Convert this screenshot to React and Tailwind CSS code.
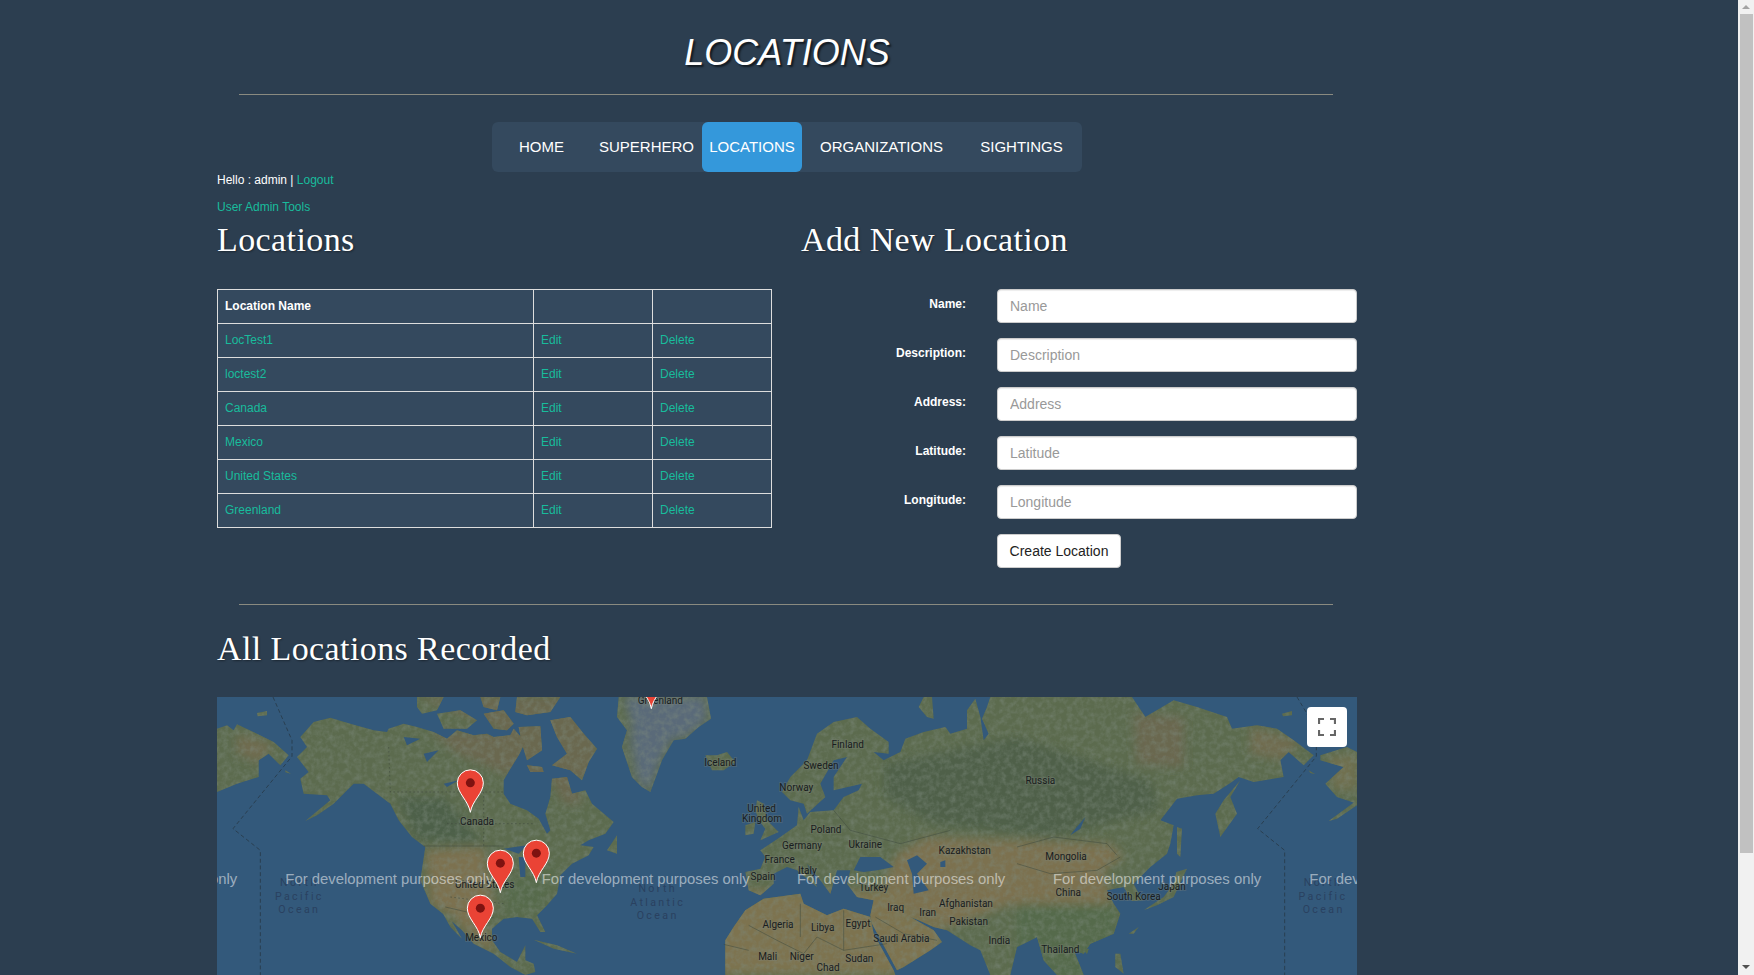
const NAV = [
  { label: "HOME", w: "w-[99px]" },
  { label: "SUPERHERO", w: "w-[111px]" },
  { label: "LOCATIONS", w: "w-[100px]", active: true },
  { label: "ORGANIZATIONS", w: "w-[159px]" },
  { label: "SIGHTINGS", w: "w-[121px]" },
];
const ROWS = ["LocTest1", "loctest2", "Canada", "Mexico", "United States", "Greenland"];
const FIELDS = ["Name", "Description", "Address", "Latitude", "Longitude"];

// the map is traced in three 400px panels at 3x, so panel b starts at 1200 and c at 2400
const B = 1200;
const C = 2400;
const pts = (s, dx = 0) => {
  const n = s.trim().split(/\s+/).map(Number);
  const out = [];
  for (let i = 0; i < n.length; i += 2) out.push(`${n[i] + dx} ${n[i + 1]}`);
  return out;
};
const shape = (s, dx = 0) => `M${pts(s, dx).join("L")}Z`;

const EURASIA = `M${[
  ...pts("520 310 495 285 520 240 570 190 600 110 650 75 720 60 760 95 815 135 815 170 770 165 800 190 850 165 865 125 920 105 985 90 1000 110 1050 95 1050 40 1075 5 1090 60 1100 130 1115 110 1095 65 1110 30 1120 0", B),
  ...pts("0 0 345 0 385 60 470 10 540 30 630 60 645 95 720 85 780 95 830 130 890 175 860 205 815 165 790 190 800 240 710 255 665 240 640 258 590 290 540 295 480 305 430 370 470 385 460 440 450 470 400 510 350 560 375 610 345 612 320 570 270 580 290 620 310 650 290 710 220 740 200 770 170 760 200 834 120 834 80 790 60 720 0 750", C),
  ...pts("1180 834 1120 834 1090 760 1060 745 990 700 950 690 905 670 880 660 950 700 975 735 940 760 860 810 840 820 765 680 760 655 770 610 720 600 690 560 700 520 660 520 640 590 610 550 570 500 600 570 540 520 510 510 470 530 470 560 430 595 395 580 385 525 430 515 445 480 430 460 490 420 540 385 545 330 560 370 580 345 650 340 680 300 725 280 735 260 650 280 650 240 690 180 650 190 610 260 625 300 570 350 560 320", B),
].join("L")}Z`;

const LAND = [
  shape("0 95 30 85 50 100 60 82 120 110 170 135 215 175 190 205 155 170 125 190 125 240 60 260 0 285"),
  shape("120 48 150 42 150 55 122 58"),
  shape("205 220 222 230 205 226"),
  // north america
  shape("240 180 270 150 250 120 290 75 340 62 400 80 470 100 510 105 515 95 560 80 600 90 650 105 690 125 720 100 770 115 810 110 830 120 880 115 890 95 925 135 905 175 880 215 860 250 860 290 880 320 930 340 965 365 990 410 1000 400 985 350 1000 300 1005 245 1050 240 1065 290 1105 280 1125 320 1190 375 1165 410 1115 430 1090 445 1130 450 1115 475 1065 500 1030 535 1020 590 990 625 960 655 985 705 970 705 945 665 900 660 860 665 825 695 825 730 850 765 900 795 925 745 925 790 950 800 955 825 925 834 880 810 830 770 770 740 735 700 690 660 640 620 610 550 625 450 585 420 545 370 520 320 480 290 440 260 410 260 385 285 350 320 300 355 265 372 340 310 330 295 260 290 250 245 275 225"),
  shape("670 635 700 665 735 725 700 690"),
  shape("950 728 1020 745 1080 770 1010 755"),
  shape("1170 460 1200 415 1200 470"),
  // arctic islands
  shape("600 0 680 0 660 40 615 50 600 30"),
  shape("660 50 730 40 780 70 750 95 680 95"),
  shape("790 0 850 0 840 40 800 30"),
  shape("800 50 860 40 890 80 870 100 830 95"),
  shape("900 0 1030 0 1000 45 930 55 895 45"),
  shape("905 90 970 88 975 160 930 190 915 140"),
  shape("1000 70 1060 60 1100 110 1140 155 1115 195 1095 250 1060 220 1005 205 1050 170 1020 120"),
  shape("930 205 975 210 980 225 940 225"),
  // greenland, iceland, britain
  shape("5 0 270 0 282 65 245 90 205 125 170 130 135 190 100 285 75 270 45 240 15 150 30 100 0 60", B),
  shape("265 175 300 175 330 165 355 195 320 220 285 220", B),
  shape("420 310 440 320 450 370 485 405 430 430 445 395 425 370 415 340", B),
  shape("385 385 415 375 410 410 385 415", B),
  shape("905 30 920 0 945 0 950 65 930 60", B),
  // africa
  shape("325 730 350 690 385 640 440 605 550 590 560 620 630 655 680 635 760 660 770 710 830 820 835 834 325 834", B),
  EURASIA,
  shape("670 250 640 300 660 350 610 420 595 350 620 310", C),
  shape("480 390 495 395 490 480 480 470", C),
  shape("380 640 440 600 470 560 478 525 510 515 470 600 420 625", C),
  shape("335 710 365 690 350 710", C),
  shape("295 770 310 770 320 830 295 810", C),
  shape("200 760 215 755 210 770", C),
  shape("910 175 990 150 1020 165 1020 320 960 300 925 260 980 210 910 190", C),
  shape("935 372 1020 310 1020 325 960 365", C),
  shape("795 50 825 42 825 55 798 58", C),
  shape("875 220 895 232 880 228", C),
].join("");

const TINTS = [
  ["#6b674f", shape("640 100 950 110 950 220 860 230 720 170")],
  ["#6b674f", shape("600 0 1140 0 1140 250 900 250 880 110")],
  ["#6b674f", shape("1000 240 1060 240 1100 320 1040 320")],
  ["#7b7150", shape("625 460 800 450 830 620 760 680 640 620")],
  ["#7b7150", shape("700 650 820 700 830 770 770 730")],
  ["#4e6049", shape("540 300 680 300 800 440 600 430")],
  ["#566a4c", shape("860 560 1020 500 980 650 870 660")],
  ["#6f6c4f", shape("60 110 170 140 130 200 60 170")],
  ["#5b6a54", shape("0 60 40 100 30 200 60 260 120 300 0 300", B)],
  ["#5a6b79", shape("20 0 265 0 270 70 205 120 165 125 130 190 95 285 60 240 45 150 45 80", B)],
  ["#4f6048", shape("800 200 1200 120 1600 250 1630 340 1300 420 950 380 800 300", B)],
  ["#7b7150", shape("840 470 930 420 1200 430 1480 440 1520 480 1460 520 1500 680 1280 680 1180 620 1000 690 790 620 800 560", B)],
  ["#7d7350", shape("760 610 980 690 970 780 840 830", B)],
  ["#7d7350", shape("300 580 860 580 860 834 300 834", B)],
  ["#6f6c4f", shape("700 90 850 130 800 190 700 170", C)],
  ["#6a684f", shape("350 50 500 60 500 210 360 200", C)],
  ["#556a4c", shape("0 620 300 620 290 834 0 834", C)],
  ["#70704f", shape("930 180 1020 170 1020 280 950 280", C)],
];

const WATER = [
  shape("620 170 665 160 630 195"),
  shape("560 120 610 125 570 145"),
  shape("680 260 725 250 690 270"),
  shape("860 455 930 445 905 470"),
  shape("905 480 925 480 925 540 910 540"),
  shape("950 460 985 500 950 505"),
  shape("710 520 730 480 790 480 830 510 780 520 740 525", B),
  shape("870 490 900 475 930 500 900 530 935 580 890 590 885 530", B),
  shape("970 495 985 490 985 510 970 510", B),
  shape("205 360 190 395 160 415 175 395", C),
].join("");

const DASHED = "M168 0L225 130L225 178L48 395L130 460L130 834M3240 0L3270 50L3298 150L3298 178L3122 395L3203 460L3203 834";
const BORDERS = `M620 447L860 447M685 630L750 645L790 680L830 660${[
  "395 685 480 730 560 770 600 720 680 760",
  "550 620 550 720",
  "680 640 680 760 810 740",
  "320 742 395 760",
  "775 660 860 710 960 730",
  "650 340 700 400 850 440 1000 400",
].map((s) => `M${pts(s, B).join("L")}`).join("")}${[
  "0 450 110 420 270 440 300 475",
  "0 500 100 530 240 520 310 480",
].map((s) => `M${pts(s, C).join("L")}`).join("")}`;
const DOTTED = "M515 150L520 285L860 285M690 380L950 380M800 285L800 447M640 540L830 560M700 600L860 620";

const LABELS = [
  ["Canada", 780, 372], ["United States", 803, 561], ["Mexico", 793, 720],
  ["Greenland", B + 130, 9], ["Iceland", B + 310, 195], ["Finland", B + 692, 141], ["Sweden", B + 612, 205],
  ["Norway", B + 538, 270], ["United", B + 434, 335], ["Kingdom", B + 435, 363], ["Poland", B + 627, 396],
  ["Germany", B + 555, 445], ["Ukraine", B + 745, 441], ["France", B + 488, 487], ["Italy", B + 571, 520],
  ["Spain", B + 438, 537], ["Kazakhstan", B + 1043, 459], ["Turkey", B + 770, 571], ["Iraq", B + 836, 631],
  ["Iran", B + 932, 646], ["Afghanistan", B + 1047, 619], ["Pakistan", B + 1055, 672], ["Algeria", B + 483, 681],
  ["Libya", B + 617, 690], ["Egypt", B + 723, 679], ["Saudi Arabia", B + 853, 723], ["India", B + 1147, 730],
  ["Mali", B + 452, 777], ["Niger", B + 554, 778], ["Sudan", B + 727, 783], ["Chad", B + 633, 810],
  ["Russia", C + 70, 249], ["Mongolia", C + 147, 477], ["China", C + 154, 585], ["South Korea", C + 350, 597],
  ["Japan", C + 465, 568], ["Thailand", C + 130, 756],
];
const OCEANS = [
  ["North", 247, 557], ["Pacific", 247, 597], ["Ocean", 247, 637],
  ["North", B + 122, 574], ["Atlantic", B + 122, 615], ["Ocean", B + 122, 655],
  ["North", C + 918, 557], ["Pacific", C + 918, 597], ["Ocean", C + 920, 637],
];
const PINS = [[760, 346], [850, 587], [958, 557], [790, 722], [B + 103, 35]];
const WATERMARKS = [-564, 205, 974, 1740, 2508, 3277];

function WorldMap() {
  return (
    <svg viewBox="0 0 3420 834" className="block w-full h-full">
      <defs>
        <clipPath id="land"><path d={LAND} /></clipPath>
        <filter id="soft" x="-10%" y="-10%" width="120%" height="120%">
          <feGaussianBlur stdDeviation="14" />
        </filter>
        <filter id="terrain" x="0" y="0" width="100%" height="100%">
          <feTurbulence type="fractalNoise" baseFrequency="0.06" numOctaves="3" seed="7" />
          <feColorMatrix type="matrix" values="0 0 0 0 0.2  0 0 0 0 0.25  0 0 0 0 0.2  0 0 0 1 -0.38" />
        </filter>
      </defs>
      <rect width="3420" height="834" fill="#33597b" />

      <g clipPath="url(#land)">
        <rect width="3420" height="834" fill="#5c6b4e" />
        <g filter="url(#soft)">
          {TINTS.map(([fill, d]) => <path key={d} fill={fill} d={d} />)}
        </g>
        <rect width="3420" height="834" filter="url(#terrain)" />
      </g>
      <path fill="#33597b" d={WATER} />

      <path fill="none" stroke="#283a48" strokeWidth="2.5" strokeDasharray="12 8" d={DASHED} />
      <path fill="none" stroke="#3f4a3e" strokeOpacity="0.6" strokeWidth="2.5" d={BORDERS} />
      <path fill="none" stroke="#3f4a3e" strokeOpacity="0.7" strokeWidth="2.5" strokeDasharray="5 7" d={DOTTED} />

      {LABELS.map(([t, x, y]) => (
        <text key={t} x={x} y={y} textAnchor="middle" dominantBaseline="central" fontFamily="Roboto, sans-serif" fontSize="30" fill="#191d20" stroke="#7d8378" strokeOpacity="0.3" strokeWidth="6" paintOrder="stroke">
          {t}
        </text>
      ))}
      {OCEANS.map(([t, x, y], i) => (
        <text key={i} x={x} y={y} textAnchor="middle" dominantBaseline="central" fontFamily="Roboto, sans-serif" fontSize="32" letterSpacing="7" fill="#2a4160">
          {t}
        </text>
      ))}
      {WATERMARKS.map((x) => (
        <text key={x} x={x} y={561} fontFamily="Liberation Sans, sans-serif" fontSize="44.6" fill="#fff" fillOpacity="0.52">
          For development purposes only
        </text>
      ))}
      {PINS.map(([x, y]) => (
        <g key={x} transform={`translate(${x},${y}) scale(3)`}>
          <path fill="#ea4335" stroke="#fff" strokeWidth="1" d="M0 0C-2 -12 -13 -19 -13 -29.5A13 13 0 1 1 13 -29.5C13 -19 2 -12 0 0Z" />
          <circle cy="-29.5" r="4.5" fill="#7e1210" />
        </g>
      ))}
    </svg>
  );
}

function Scrollbar() {
  return (
    <div className="w-4 h-full bg-[#f1f1f1] flex flex-col items-center shrink-0">
      <div className="h-[14px] w-full flex items-center justify-center">
        <svg width="8" height="4" viewBox="0 0 8 4"><path d="M4 0L8 4H0Z" fill="#a3a3a3" /></svg>
      </div>
      <div className="h-[839px] w-[13px] bg-[#c1c1c1]" />
      <div className="flex-1" />
      <div className="h-[17px] w-full flex items-center justify-center">
        <svg width="8" height="4" viewBox="0 0 8 4"><path d="M4 4L0 0H8Z" fill="#505050" /></svg>
      </div>
    </div>
  );
}

export default function App() {
  const link = "text-[#18bc9c] no-underline";
  const heading = "font-['Liberation_Serif',serif] text-[34px] leading-[36px] tracking-[0.4px] text-white [text-shadow:1px_1px_2px_rgba(0,0,0,0.4)]";
  const cell = "border border-[#dddddd] pl-[7px] pb-px";

  return (
    <div className="h-[975px] overflow-hidden flex bg-[#2c3e50] font-['Liberation_Sans',Arial,sans-serif] text-white">
      <div className="flex-1 min-w-0">
        <div className="ml-[217px] w-[1140px]">
          <h1 className="pt-[33px] text-center text-[36px] leading-10 italic [text-shadow:2px_2px_2px_rgba(0,0,0,0.6)]">LOCATIONS</h1>
          <hr className="mt-[21px] ml-[22px] w-[1094px] border-0 border-t border-[#8a8a80]" />

          <nav className="mt-[27px] mx-auto w-[590px] h-[50px] flex rounded-md bg-[#34495e]">
            {NAV.map((n) => (
              <a
                key={n.label}
                className={`${n.w} flex items-center justify-center rounded-md text-[15px] ${n.active ? "bg-[#3498db]" : ""}`}
              >
                {n.label}
              </a>
            ))}
          </nav>

          <div className="text-xs leading-[17px]">
            Hello : admin | <a className={link}>Logout</a>
          </div>
          <div className="mt-[10px] text-xs leading-[17px]">
            <a className={link}>User Admin Tools</a>
          </div>

          <div className="mt-[6px] flex gap-[29px]">
            <div className="w-[555px]">
              <h2 className={heading}>Locations</h2>
              <table className="mt-[31px] w-[554px] table-fixed border-collapse bg-[#34495e] text-xs">
                <colgroup>
                  <col className="w-[316px]" />
                  <col className="w-[119px]" />
                  <col className="w-[119px]" />
                </colgroup>
                <thead>
                  <tr className="h-[34px]">
                    <th className={`${cell} text-left font-bold`}>Location Name</th>
                    <th className={cell} />
                    <th className={cell} />
                  </tr>
                </thead>
                <tbody>
                  {ROWS.map((r) => (
                    <tr key={r} className="h-[34px]">
                      <td className={cell}><a className={link}>{r}</a></td>
                      <td className={cell}><a className={link}>Edit</a></td>
                      <td className={cell}><a className={link}>Delete</a></td>
                    </tr>
                  ))}
                </tbody>
              </table>
            </div>

            <div className="w-[556px]">
              <h2 className={heading}>Add New Location</h2>
              <form className="mt-[31px] flex flex-col gap-[15px]">
                {FIELDS.map((f) => (
                  <div key={f} className="flex items-start gap-[31px]">
                    <label className="w-[165px] pt-[7px] text-right text-xs leading-[17px] font-bold">{f}:</label>
                    <input
                      placeholder={f}
                      className="w-[360px] h-[34px] rounded border border-[#cccccc] bg-white px-3 text-sm text-[#555555] placeholder:text-[#999999] shadow-[inset_0_1px_1px_rgba(0,0,0,0.075)]"
                    />
                  </div>
                ))}
                <div className="pl-[196px]">
                  <button type="button" className="w-[124px] h-[34px] rounded border border-[#cccccc] bg-white text-sm text-[#222222]">
                    Create Location
                  </button>
                </div>
              </form>
            </div>
          </div>

          <hr className="mt-[36px] ml-[22px] w-[1094px] border-0 border-t border-[#8a8a80]" />
          <h2 className={`${heading} mt-[26px]`}>All Locations Recorded</h2>

          <div className="relative mt-[30px] h-[278px] overflow-hidden">
            <WorldMap />
            <button type="button" className="absolute top-[10px] right-[10px] w-10 h-10 rounded-sm bg-white flex items-center justify-center">
              <svg width="18" height="18" viewBox="0 0 18 18" fill="none" stroke="#666666" strokeWidth="2.2">
                <path d="M1 6V1H6M12 1H17V6M17 12V17H12M6 17H1V12" />
              </svg>
            </button>
          </div>
        </div>
      </div>
      <Scrollbar />
    </div>
  );
}
